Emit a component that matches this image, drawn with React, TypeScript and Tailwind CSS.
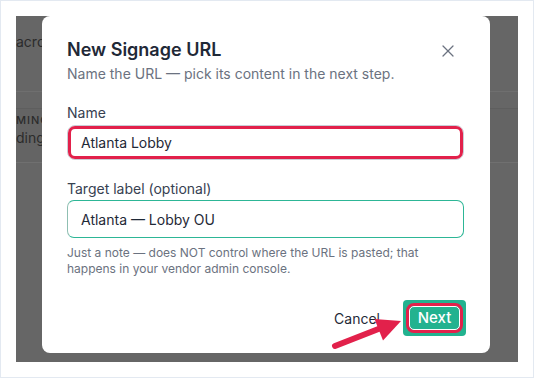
import { X } from 'lucide-react'

/**
 * New Signage URL dialog over a dimmed page, with annotation highlights
 */
export default function App() {
  return (
    <div
      className="relative w-[534px] h-[378px] overflow-hidden border border-[#e3e9f1] bg-white p-[15px]"
      style={{ fontFamily: 'Inter, "Noto Sans", sans-serif' }}
    >
      {/* dimmed page behind the dialog */}
      <div className="relative h-[346px] w-[502px] overflow-hidden bg-[#666666]">
        <div className="flex flex-col text-[#2b2b2b]">
          <div className="h-[76px] border-b border-[#6f6f6f] pt-[16px] text-[14px] leading-5">
            across
          </div>
          <div className="h-[16px]" />
          <div className="h-[55px] border-t border-[#5e5e5e] border-b border-b-[#707070] bg-[#646464]">
            <div className="pt-[3px] text-[11px] font-medium leading-4 tracking-[1px]">MING</div>
            <div className="text-[14px] leading-5">ding.</div>
          </div>
        </div>

        {/* dialog */}
        <div className="absolute left-[26px] top-0 flex h-[337px] w-[448px] flex-col rounded-[8px] bg-white pl-[25px] pr-[26px] pt-[20px] pb-[17px]">
          <div className="flex items-start justify-between">
            <h2 className="text-[18px] font-semibold leading-7 text-[#1f2937]">New Signage URL</h2>
            <button className="mr-[6px] mt-[5px] text-[#6b7280]">
              <X size={20} strokeWidth={1.5} />
            </button>
          </div>
          <p className="text-[14px] leading-5 text-[#6b7280]">
            Name the URL — pick its content in the next step.
          </p>

          <label className="mt-[19px] text-[14px] leading-5 text-[#374151]">Name</label>
          <div className="mt-[2px] h-[35px] rounded-[8px] border border-[#c9ced6] p-0">
            <div className="flex h-full items-center rounded-[7px] border-[3px] border-[#e2214b] pl-[10px] text-[14px] text-[#1f2937]">
              Atlanta Lobby
            </div>
          </div>

          <label className="mt-[19px] text-[14px] leading-5 text-[#374151]">
            Target label (optional)
          </label>
          <div className="mt-[1px] flex h-[38px] items-center rounded-[7px] border border-[#2db696] border-l-[#8fbfb2] pl-[13px] text-[14px] text-[#1f2937]">
            Atlanta — Lobby OU
          </div>
          <p className="mt-[7px] text-[12px] leading-4 text-[#6b7280]">
            Just a note — does NOT control where the URL is pasted; that happens in your vendor admin console.
          </p>

          <div className="mt-auto flex items-center justify-end gap-[23px]">
            <button className="text-[14px] text-[#1f2937]">Cancel</button>
            <div className="mr-[-2px] rounded-[4px] bg-[#22b28f] p-[3px]">
              <div className="rounded-[8px] border-[3px] border-[#e2214b]">
                <div className="flex h-[24px] w-[51px] items-center justify-center rounded-[5px] border border-white bg-[#22b28f] text-[15px] font-medium text-white">
                  Next
                </div>
              </div>
            </div>
          </div>
        </div>
      </div>

      {/* annotation arrow */}
      <svg className="pointer-events-none absolute left-0 top-0" width="534" height="378" viewBox="0 0 534 378">
        <line x1="334" y1="345" x2="380" y2="327" stroke="#e2214b" strokeWidth="6" strokeLinecap="round" />
        <polygon points="400,320 373.5,318 382,339.5" fill="#e2214b" />
      </svg>
    </div>
  )
}
